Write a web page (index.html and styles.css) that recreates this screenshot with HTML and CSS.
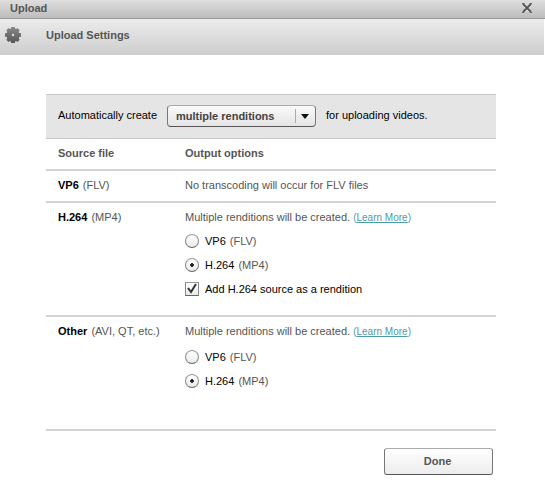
FILE: index.html
```html
<!DOCTYPE html>
<html lang="en">
<head>
<meta charset="utf-8">
<title>Upload</title>
<link rel="stylesheet" href="styles.css">
</head>
<body>
<header class="titlebar">
  <h1 class="title">Upload</h1>
  <button class="close" type="button" aria-label="Close">
    <svg width="10" height="11" viewBox="0 0 10 11" fill="none" stroke-width="1.800"><path d="M1 2l8 8M9 2l-8 8" stroke="#eee"/><path d="M1 1l8 8M9 1L1 9" stroke="#555"/><path d="M0 .5h2.500M7.500.5H10M0 9.500h2.500M7.500 9.500H10" stroke="#666" stroke-width="1"/></svg>
  </button>
</header>
<div class="section-bar">
  <svg class="gear" width="16" height="16" viewBox="0 0 16 16">
    <defs><linearGradient id="metal" x1="0" y1="0" x2="0" y2="1"><stop offset="0" stop-color="#888"/><stop offset="1" stop-color="#555"/></linearGradient></defs>
    <path fill="url(#metal)" fill-rule="evenodd" d="M6.200 0h3.600l.3 1.500 1 .4L12.500 1l2.200 2.300-1 1.500.5 1.200 1.800.3v3.400l-1.800.3-.5 1.200 1 1.500-2.200 2.300-1.400-.9-1 .4-.3 1.800H6.200l-.3-1.800-1-.4-1.400.9-2.200-2.300 1-1.500L1.800 10 0 9.700V6.300L1.800 6l.5-1.200-1-1.500L3.500 1l1.400.9 1-.4zM8 6.800a1.200 1.200 0 1 0 0 2.400 1.200 1.200 0 0 0 0-2.400z"/>
  </svg>
  <h2 class="title">Upload Settings</h2>
</div>
<form class="settings">
  <div class="create">
    <label for="mode">Automatically create</label>
    <span class="picker">
      <select id="mode"><option>multiple renditions</option><option>single rendition</option></select>
      <svg class="arrow" width="16" height="14" viewBox="0 0 16 14"><path d="M.5 0v14" stroke="#aaa"/><path d="M6 5h8l-4 5z" fill="#111"/></svg>
    </span>
    <span>for uploading videos.</span>
  </div>
  <table class="sources">
    <thead>
      <tr><th class="source">Source file</th><th>Output options</th></tr>
    </thead>
    <tbody>
      <tr><td><b>VP6</b> (FLV)</td><td>No transcoding will occur for FLV files</td></tr>
      <tr class="tall">
        <td><b>H.264</b> (MP4)</td>
        <td>
          <p>Multiple renditions will be created. <span class="more">(<a href="#">Learn More</a>)</span></p>
          <label class="choice"><input type="radio" name="h264"><span><em>VP6</em> (FLV)</span></label>
          <label class="choice"><input type="radio" name="h264" checked><span><em>H.264</em> (MP4)</span></label>
          <label class="choice"><input type="checkbox" checked><span><em>Add H.264 source as a rendition</em></span></label>
        </td>
      </tr>
      <tr class="tall last">
        <td><b>Other</b> (AVI, QT, etc.)</td>
        <td>
          <p>Multiple renditions will be created. <span class="more">(<a href="#">Learn More</a>)</span></p>
          <label class="choice"><input type="radio" name="other"><span><em>VP6</em> (FLV)</span></label>
          <label class="choice"><input type="radio" name="other" checked><span><em>H.264</em> (MP4)</span></label>
        </td>
      </tr>
    </tbody>
  </table>
  <div class="actions"><button class="done" type="button">Done</button></div>
</form>
</body>
</html>
```
FILE: styles.css
```css
* { box-sizing: border-box; }
body {
  margin: 0;
  background: #fff;
  color: #555;
  font: 11px/24px "Liberation Sans", Arial, sans-serif;
}
.title { margin: 0; font-size: 11px; line-height: 16px; font-weight: bold; }
.titlebar {
  display: flex;
  align-items: flex-start;
  justify-content: space-between;
  height: 19px;
  padding: 0 13px 0 10px;
  background: linear-gradient(#dedede, #bdbdbd);
  border-bottom: 1px solid #999;
}
.close {
  padding: 3px 0 0;
  border: 0;
  background: none;
  line-height: 0;
}
.section-bar {
  display: flex;
  gap: 25px;
  height: 36px;
  margin-right: 1px;
  padding: 8px 5px;
  background: linear-gradient(#ececec, #cdcdcd);
}
.settings { margin: 39px 49px 0 46px; }
.create {
  display: flex;
  align-items: flex-start;
  gap: 10px;
  height: 45px;
  padding: 8px 12px;
  background: #e5e5e5;
  border: 1px solid #c8c8c8;
  border-width: 1px 0;
  color: #000;
}
.picker { position: relative; display: flex; padding-top: 2px; }
.picker select {
  appearance: none;
  width: 149px;
  height: 22px;
  padding: 0 30px 1px 8px;
  border: 1px solid #777;
  border-color: #aaa #777 #555;
  border-radius: 4px;
  background: linear-gradient(#fafafa, #e4e4e4);
  color: #444;
  font: bold 11px "Liberation Sans", Arial, sans-serif;
}
.arrow { position: absolute; top: 6px; right: 5px; pointer-events: none; }
.sources { width: 100%; border-collapse: separate; border-spacing: 0; }
.sources th, .sources td {
  padding: 2px 0 4px;
  border-bottom: 2px solid #d4d4d4;
  text-align: left;
  vertical-align: top;
}
.sources th:first-child, .sources td:first-child { padding-left: 12px; }
.source { width: 139px; }
.sources .tall td { padding-top: 2px; padding-bottom: 14px; }
.sources .last td { padding-bottom: 36px; }
.last p { margin-bottom: 2px; }
p { margin: 0; }
b, em { margin-right: 1px; color: #000; font-style: normal; }
.more { font-size: 10px; line-height: 16px; }
.more, .more a { color: #4f9ba3; }
.choice { display: flex; align-items: center; gap: 6px; }
.choice input {
  appearance: none;
  width: 14px;
  height: 14px;
  margin: 0;
  border: 1px solid #888;
  border-color: #999 #888 #666;
  background: linear-gradient(#fff, #eaeaea);
}
.choice input[type="radio"] { border-radius: 50%; }
.choice input[type="radio"]:checked {
  background: radial-gradient(circle, #222 0 1px, #444 2px, transparent 2px), linear-gradient(#fff, #eaeaea);
}
.choice input[type="checkbox"]:checked {
  background: url("data:image/svg+xml,%3Csvg xmlns='http://www.w3.org/2000/svg' viewBox='0 0 12 12'%3E%3Cpath d='M2 5l3 4 5-8' fill='none' stroke='%23303438' stroke-width='2'/%3E%3C/svg%3E") center / 12px 12px no-repeat, linear-gradient(#fff, #eaeaea);
}
.actions { display: flex; justify-content: flex-end; margin: 17px 3px 0 0; }
.done {
  width: 109px;
  height: 27px;
  padding: 0 8px 1px 6px;
  border: 1px solid #777;
  border-color: #aaa #777 #555;
  border-radius: 3px;
  background: linear-gradient(#fff, #ececec);
  color: #555;
  font: bold 11px "Liberation Sans", Arial, sans-serif;
}
```
